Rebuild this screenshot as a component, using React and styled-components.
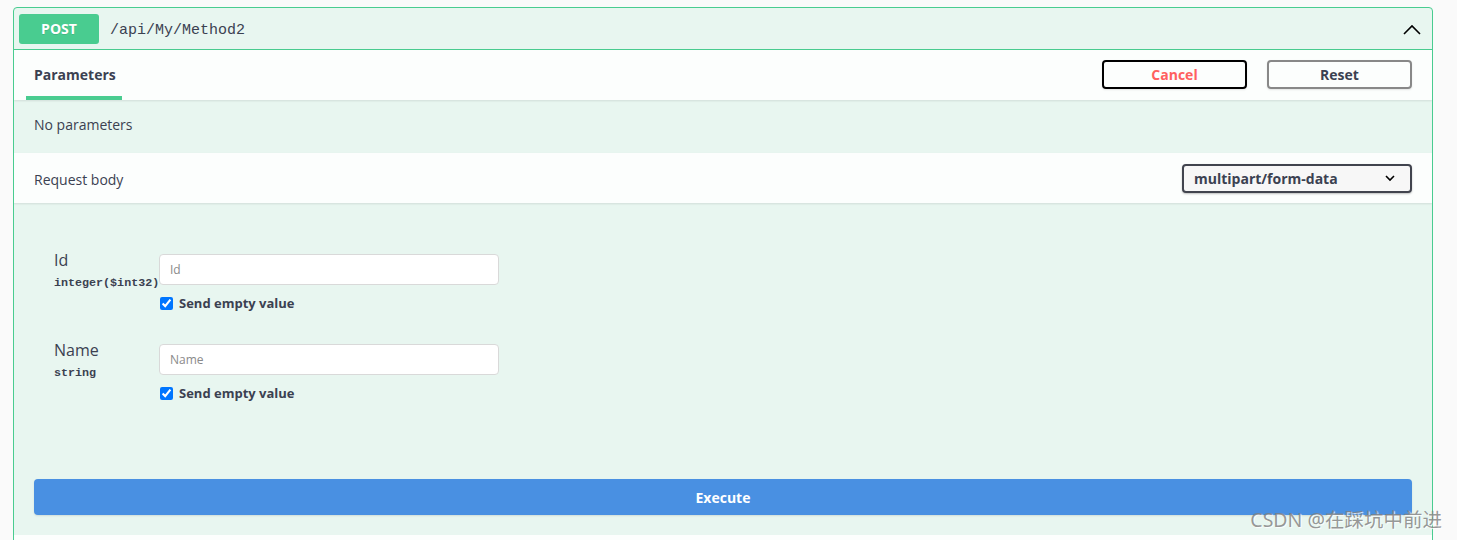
import React from "react";
import styled, { createGlobalStyle } from "styled-components";

const Global = createGlobalStyle`
  html, body { margin: 0; padding: 0; background: #fafafa; }
  body { font-family: "Open Sans", "Noto Sans", sans-serif; color: #3b4151; }
  * { box-sizing: border-box; }
`;

const Page = styled.div`
  position: relative;
  width: 1457px;
  height: 540px;
  overflow: hidden;
  padding: 7px 0 0 13px;
`;

const Card = styled.div`
  width: 1420px;
  border: 1px solid #49cc90;
  border-radius: 4px;
  background: #e8f6f0;
  overflow: hidden;
`;

const Summary = styled.div`
  display: flex;
  align-items: center;
  height: 42px;
  padding: 0 5px;
  border-bottom: 1px solid #49cc90;
`;

const Method = styled.span`
  width: 80px;
  height: 30px;
  border-radius: 3px;
  background: #49cc90;
  color: #fff;
  font-weight: 700;
  font-size: 14px;
  display: flex;
  align-items: center;
  justify-content: center;
  text-shadow: 0 1px 0 rgba(0,0,0,.1);
`;

const Path = styled.span`
  margin-left: 11px;
  padding-top: 3px;
  font-family: "Liberation Mono", monospace;
  font-size: 15px;
  color: #3b4151;
  flex: 1;
`;

const Chevron = styled.svg`
  width: 20px;
  height: 20px;
  margin-right: 5px;
  margin-top: 2px;
`;

const SectionHeader = styled.div`
  display: flex;
  align-items: center;
  min-height: 50px;
  padding: 0 20px;
  background: rgba(255,255,255,.85);
  box-shadow: 0 1px 2px rgba(0,0,0,.1);
  position: relative;
`;

const Tab = styled.div`
  align-self: stretch;
  display: flex;
  align-items: center;
  margin-left: -8px;
  padding: 2px 8px 0;
  width: 96px;
  font-size: 14px;
  font-weight: 700;
  color: #3b4151;
  border-bottom: 4px solid #49cc90;
`;

const HeaderLabel = styled.div`
  font-size: 14px;
  color: #3b4151;
  padding-top: 2px;
`;

const Spacer = styled.div`
  flex: 1;
`;

const Btn = styled.button`
  width: 145px;
  height: 29px;
  margin-left: ${p => p.$gap || 0}px;
  margin-top: -2px;
  border-radius: 4px;
  background: transparent;
  border: 2px solid ${p => p.$border};
  color: ${p => p.$color};
  font-family: inherit;
  font-size: 14px;
  font-weight: 700;
  box-shadow: 0 1px 2px rgba(0,0,0,.1);
`;

const Plain = styled.div`
  height: 53px;
  padding: 15px 20px 0;
  font-size: 14px;
  color: #3b4151;
`;

const Select = styled.div`
  width: 230px;
  height: 29px;
  border: 2px solid #41444e;
  border-radius: 4px;
  background: #f7f7f7;
  box-shadow: 0 1px 2px rgba(0,0,0,.25);
  display: flex;
  align-items: center;
  justify-content: space-between;
  padding: 0 14px 0 10px;
  font-size: 14px;
  font-weight: 700;
  color: #3b4151;
`;

const Body = styled.div`
  padding: 46px 20px 20px;
`;

const Params = styled.div`
  display: flex;
  flex-direction: column;
  gap: 27px;
  padding-left: 20px;
`;

const Row = styled.div`
  display: grid;
  grid-template-columns: 105px 340px;
  align-items: start;
`;

const Label = styled.div`
  display: flex;
  flex-direction: column;
  padding-top: 2px;
`;

const Name = styled.div`
  font-size: 16px;
  color: #3b4151;
  line-height: 18px;
`;

const Type = styled.div`
  font-family: "Liberation Mono", monospace;
  font-size: 11.7px;
  font-weight: 700;
  color: #3b4151;
  margin-top: 7px;
  white-space: nowrap;
`;

const Field = styled.div`
  display: flex;
  flex-direction: column;
  padding-top: 5px;
`;

const Input = styled.input`
  width: 340px;
  height: 31px;
  border: 1px solid #d9d9d9;
  border-radius: 4px;
  background: #fff;
  padding: 0 10px;
  font-family: inherit;
  font-size: 12px;
  outline: none;
  &::placeholder { color: #8a8a8a; }
`;

const Check = styled.label`
  display: flex;
  align-items: center;
  margin-top: 9px;
  font-size: 13px;
  font-weight: 700;
  color: #3b4151;
  input { margin: 0 6px 0 1px; width: 13px; height: 13px; accent-color: #0075ff; }
`;

const Execute = styled.button`
  margin-top: 77px;
  width: 100%;
  height: 36px;
  border: none;
  border-radius: 4px;
  background: #4990e2;
  color: #fff;
  font-family: inherit;
  font-size: 14px;
  font-weight: 700;
  box-shadow: 0 1px 2px rgba(0,0,0,.1);
`;

const NextSection = styled.div`
  height: 30px;
  background: rgba(255,255,255,.85);
`;

const Watermark = styled.div`
  position: absolute;
  right: 15px;
  bottom: 7px;
  font-family: "Noto Sans", "Noto Sans CJK SC", sans-serif;
  font-size: 19.5px;
  color: rgba(125,125,125,.8);
  text-shadow: 1px 1px 1px rgba(255,255,255,.9);
`;

const params = [
  { name: "Id", type: "integer($int32)" },
  { name: "Name", type: "string" },
];

export default function App() {
  return (
    <Page>
      <Global />
      <Card>
        <Summary>
          <Method>POST</Method>
          <Path>/api/My/Method2</Path>
          <Chevron viewBox="0 0 20 20">
            <polyline points="2,14 10,6 18,14" fill="none" stroke="#000" strokeWidth="1.6" />
          </Chevron>
        </Summary>
        <SectionHeader>
          <Tab>Parameters</Tab>
          <Spacer />
          <Btn $border="#000" $color="#ff6060">Cancel</Btn>
          <Btn $border="#888" $color="#3b4151" $gap={20}>Reset</Btn>
        </SectionHeader>
        <Plain>No parameters</Plain>
        <SectionHeader>
          <HeaderLabel>Request body</HeaderLabel>
          <Spacer />
          <Select>
            <span>multipart/form-data</span>
            <svg width="12" height="8" viewBox="0 0 12 8">
              <polyline points="2,2 6,6 10,2" fill="none" stroke="#000" strokeWidth="1.6" />
            </svg>
          </Select>
        </SectionHeader>
        <Body>
          <Params>
            {params.map(p => (
              <Row key={p.name}>
                <Label>
                  <Name>{p.name}</Name>
                  <Type>{p.type}</Type>
                </Label>
                <Field>
                  <Input placeholder={p.name} />
                  <Check>
                    <input type="checkbox" defaultChecked />
                    Send empty value
                  </Check>
                </Field>
              </Row>
            ))}
          </Params>
          <Execute>Execute</Execute>
        </Body>
        <NextSection />
      </Card>
      <Watermark>CSDN @在踩坑中前进</Watermark>
    </Page>
  );
}
